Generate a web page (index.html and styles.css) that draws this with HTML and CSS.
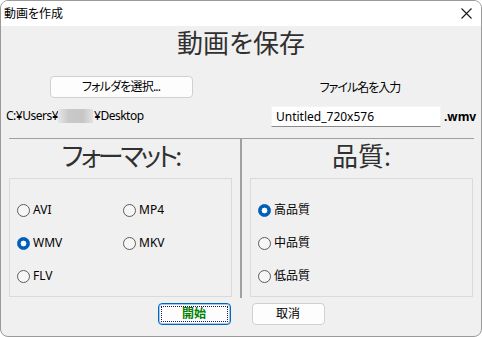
FILE: index.html
```html
<!DOCTYPE html>
<html lang="ja">
<head>
    <meta charset="UTF-8">
    <title>動画を作成</title>
    <link rel="stylesheet" href="styles.css">
</head>
<body>
    <div class="window">
        <div class="titlebar">
            <span class="title">動画を作成</span>
            <svg class="close" width="11" height="11" viewBox="0 0 11 11">
                <path d="M0.5 0.5L10.5 10.5M10.5 0.5L0.5 10.5" stroke="#1a1a1a" stroke-width="1.1" fill="none"/>
            </svg>
        </div>
        <div class="content">
            <h1 class="heading">動画を保存</h1>

            <div class="top">
                <button class="btn folder-btn">フォルダを選択...</button>
                <div class="file-label">ファイル名を入力</div>
                <div class="path">C:¥Users¥<span class="blur"></span>¥Desktop</div>
                <div class="name-row">
                    <input class="name-input" type="text" value="Untitled_720x576">
                    <span class="ext">.wmv</span>
                </div>
            </div>

            <div class="groups">
                <section class="panel panel-left">
                    <h2 class="panel-title format-title">フォーマット:</h2>
                    <div class="box format-box">
                        <label class="radio"><span class="dot"></span>AVI</label>
                        <label class="radio"><span class="dot"></span>MP4</label>
                        <label class="radio"><span class="dot checked"></span>WMV</label>
                        <label class="radio"><span class="dot"></span>MKV</label>
                        <label class="radio"><span class="dot"></span>FLV</label>
                    </div>
                </section>
                <section class="panel panel-right">
                    <h2 class="panel-title">品質:</h2>
                    <div class="box quality-box">
                        <label class="radio"><span class="dot checked"></span>高品質</label>
                        <label class="radio"><span class="dot"></span>中品質</label>
                        <label class="radio"><span class="dot"></span>低品質</label>
                    </div>
                </section>
            </div>

            <div class="actions">
                <button class="btn start">開始</button>
                <button class="btn">取消</button>
            </div>
        </div>
    </div>
</body>
</html>
```

FILE: styles.css
```css
* {
    box-sizing: border-box;
}
body {
    margin: 0;
    font-family: "Noto Sans", "Noto Sans CJK JP", sans-serif;
    font-size: 12px;
    color: #000;
    background: #fff;
    font-feature-settings: "palt";
}
.window {
    width: 482px;
    height: 337px;
    border: 1px solid #9a9a9a;
    border-radius: 8px;
    overflow: hidden;
    display: flex;
    flex-direction: column;
    background: #f0f0f0;
}
.titlebar {
    height: 25px;
    flex: none;
    background: #fff;
    display: flex;
    align-items: center;
    justify-content: space-between;
    padding: 0 9px 0 3px;
}
.title {
    font-size: 12px;
    line-height: 16px;
}
.close {
    display: block;
}
.content {
    flex: 1;
    display: flex;
    flex-direction: column;
}
.heading {
    margin: 0;
    font-size: 26px;
    line-height: 34px;
    font-weight: normal;
    text-align: center;
    color: #303030;
}

/* folder + file name */
.top {
    display: grid;
    grid-template-columns: 240px 240px;
    grid-template-rows: 22px auto;
    margin-top: 16px;
}
.btn {
    font-family: inherit;
    font-size: 12px;
    font-feature-settings: "palt";
    background: #fdfdfd;
    border: 1px solid #d0d0d0;
    border-radius: 4px;
    color: #000;
    padding: 0;
    height: 22px;
    line-height: 18px;
}
.folder-btn {
    width: 143px;
    justify-self: center;
    letter-spacing: -0.8px;
}
.file-label {
    align-self: center;
    text-align: center;
    padding-right: 2px;
    letter-spacing: -1px;
}
.path {
    margin-top: 7px;
    padding-left: 5px;
    line-height: 16px;
    letter-spacing: -0.5px;
    display: flex;
    align-items: center;
}
.blur {
    display: inline-block;
    width: 35px;
    height: 14px;
    margin: 0 1px 0 0;
    background: linear-gradient(90deg, #e6e6e6, #c9c9c9 30%, #c6c6c6 70%, #e2e2e2);
}
.name-row {
    margin-top: 8px;
    padding-left: 30px;
    display: flex;
    align-items: flex-end;
}
.name-input {
    width: 170px;
    height: 21px;
    border: 1px solid #f4f4f4;
    border-bottom-color: #8a8a8a;
    background: #fff;
    font-family: inherit;
    font-size: 12px;
    padding: 0 4px;
    outline: none;
}
.ext {
    font-weight: bold;
    margin-left: 3px;
    line-height: 16px;
    padding-bottom: 2px;
}

/* option groups */
.groups {
    display: flex;
    margin-top: 11px;
    padding-left: 8px;
    height: 160px;
}
.panel {
    border-top: 1px solid #a0a0a0;
}
.panel-left {
    width: 232px;
    padding-right: 8px;
    border-right: 1px solid #a0a0a0;
}
.panel-right {
    width: 233px;
    padding-left: 8px;
    padding-right: 1px;
    border-left: 1px solid #a0a0a0;
}
.panel-title {
    margin: 0;
    font-size: 26px;
    line-height: 34px;
    font-weight: normal;
    text-align: center;
    color: #303030;
}
.format-title {
    letter-spacing: -3px;
}
.box {
    margin-top: 5px;
    width: 223px;
    height: 119px;
    border: 1px solid #dadada;
    padding: 21px 0 0 7px;
}
.format-box {
    display: grid;
    grid-template-columns: 106px 1fr;
    grid-auto-rows: 20px;
    row-gap: 13px;
}
.quality-box {
    display: flex;
    flex-direction: column;
    gap: 13px;
}
.radio {
    display: flex;
    align-items: center;
    gap: 3px;
    height: 20px;
    line-height: 16px;
}
.dot {
    width: 13px;
    height: 13px;
    border-radius: 50%;
    border: 1px solid #5c5c5c;
    background: #f6f6f6;
    flex: none;
}
.dot.checked {
    border-color: #005fb8;
    background: radial-gradient(circle, #fff 0 2.6px, #005fb8 3.2px);
}

/* bottom buttons */
.actions {
    display: flex;
    justify-content: center;
    gap: 21px;
    margin-top: 5px;
}
.actions .btn {
    width: 73px;
}
.start {
    color: #008000;
    font-weight: bold;
    border-color: #0067c0;
    box-shadow: inset 0 0 0 1px rgba(0, 103, 192, 0.35);
    outline: 1px dotted #2a1040;
    outline-offset: -4px;
}
```
